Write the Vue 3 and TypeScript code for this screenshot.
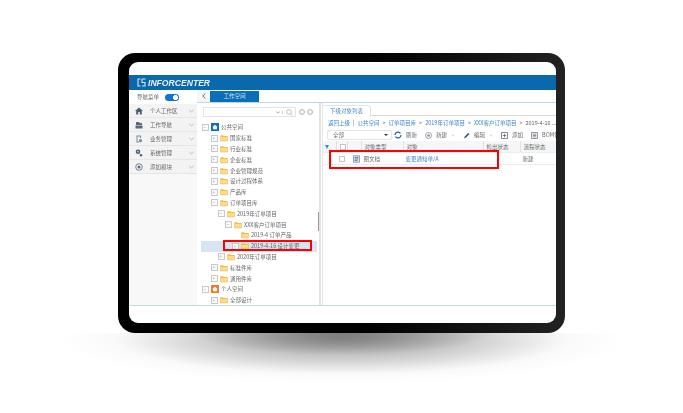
<script setup lang="ts">
const navItems = ['个人工作区', '工作导航', '业务管理', '系统管理', '添加模块']

const treeRows = [
  { label: '公共空间', level: 0, kind: 'pub', open: true },
  { label: '国家标准', level: 1 },
  { label: '行业标准', level: 1 },
  { label: '企业标准', level: 1 },
  { label: '企业管理规范', level: 1 },
  { label: '设计过程体系', level: 1 },
  { label: '产品库', level: 1 },
  { label: '订单项目库', level: 1, open: true },
  { label: '2019年订单项目', level: 2, open: true },
  { label: 'XXX客户订单项目', level: 3, open: true },
  { label: '2019-4 订单产品', level: 4, leaf: true },
  { label: '2019-4-16 设计变更', level: 4, selected: true },
  { label: '2020年订单项目', level: 2 },
  { label: '标准件库', level: 1 },
  { label: '通用件库', level: 1 },
  { label: '个人空间', level: 0, kind: 'own', open: true },
  { label: '全部设计', level: 1 },
]

const crumbs = ['公共空间', '订单项目库', '2019年订单项目', 'XXX客户订单项目']

const indent = (level: number) => (level === 0 ? 0.5 : 2.5 + 7 * level)
</script>

<template>
  <div class="page">
    <div class="device">
      <div class="screen">
        <div class="topbar">
          <svg class="logo" viewBox="0 0 9 9" width="9" height="9">
            <path d="M.5 1H3.5M1 1V8H3.5M5 1H8.5M5 1V4.5H8V8H5" fill="none" stroke="#d5e6f4" stroke-width="1.1" />
          </svg>
          <span class="brand">INFORCENTER</span>
        </div>
        <div class="main">
          <aside class="sidebar">
            <div class="nav-switch">
              <span>导航菜单</span>
              <i class="toggle"></i>
            </div>
            <div v-for="(item, i) in navItems" :key="item" class="nav-item">
              <svg viewBox="0 0 8 8" width="8" height="8" class="nav-icon">
                <path v-if="i === 0" d="M4 .5L8 4H6.8V7.5H4.8V5H3.2V7.5H1.2V4H0Z" fill="#4d5e70" />
                <path v-else-if="i === 1" d="M1 1H4L5 2H7V4H1ZM.5 4.5H7.5V7.5H.5Z" fill="#5b6b7a" />
                <path v-else-if="i === 2" d="M1.5.5H6V3H5V1.5H2.5V6.5H4V7.5H1.5ZM5.5 4A1.6 1.6 0 1 0 5.6 7.2 1.6 1.6 0 0 0 5.5 4Z" fill="#7d8a96" />
                <path v-else-if="i === 3" d="M3 .5A2.3 2.3 0 1 0 3 5.1 2.3 2.3 0 0 0 3 .5ZM3 2A.8.8 0 1 1 3 3.6.8.8 0 0 1 3 2ZM6 5A1.3 1.3 0 1 0 6 7.6 1.3 1.3 0 0 0 6 5Z" fill="#4d5e70" fill-rule="evenodd" />
                <g v-else>
                  <circle cx="4" cy="4" r="3.3" fill="none" stroke="#5b6b7a" stroke-width=".8" />
                  <circle cx="4" cy="4" r="1.5" fill="#5b6b7a" />
                </g>
              </svg>
              <span class="nav-label">{{ item }}</span>
              <svg class="nav-caret" viewBox="0 0 6 4" width="5" height="4">
                <path d="M.5.8L3 3 5.5.8" fill="none" stroke="#9aa5ad" stroke-width=".8" />
              </svg>
            </div>
          </aside>
          <div class="content">
            <div class="tabstrip">
              <span class="collapse">
                <svg viewBox="0 0 5 7" width="4" height="6"><path d="M4 .5L1 3.5 4 6.5" fill="none" stroke="#555" stroke-width="1.1" /></svg>
              </span>
              <span class="tab">工作空间</span>
            </div>
            <div class="panels">
              <section class="tree">
                <div class="tree-search">
                  <div class="search-box">
                    <svg class="search-caret" viewBox="0 0 6 4" width="4" height="3"><path d="M.5.8L3 3 5.5.8" fill="none" stroke="#777" stroke-width="1" /></svg>
                    <svg viewBox="0 0 8 8" width="7" height="7"><circle cx="3.4" cy="3.4" r="2.7" fill="none" stroke="#aaa" stroke-width=".8" /><path d="M5.4 5.4L7.5 7.5" stroke="#aaa" stroke-width=".8" /></svg>
                  </div>
                  <i class="round-btn"></i>
                  <i class="round-btn"></i>
                </div>
                <div class="tree-list">
                  <div
                    v-for="row in treeRows"
                    :key="row.label"
                    class="tree-row"
                    :class="{ selected: row.selected }"
                    :style="{ paddingLeft: indent(row.level) + 'px' }"
                  >
                    <span class="expander" :class="{ hidden: row.leaf }">{{ row.open ? '−' : '+' }}</span>
                    <span v-if="row.kind" class="space-icon" :class="row.kind">
                      <svg viewBox="0 0 8 8" width="6" height="6"><path d="M4 1L7.5 4H6.5V7H1.5V4H.5Z" fill="#fff" /></svg>
                    </span>
                    <svg v-else class="folder" viewBox="0 0 8 8" width="8" height="8">
                      <path d="M.3 1.2H3L3.8 2H7.7V7.2H.3Z" fill="#f4bb48" />
                      <path d="M.9 3H7.1V6.6H.9Z" fill="#fbdc8f" />
                    </svg>
                    <span class="tree-label">{{ row.label }}</span>
                    <span v-if="row.selected" class="tree-mark"></span>
                  </div>
                </div>
                <i class="splitter"></i>
              </section>
              <section class="list">
                <div class="list-tabs"><span class="list-tab">下级对象列表</span></div>
                <div class="crumbs">
                  <a>返回上级</a>
                  <span class="pipe">|</span>
                  <template v-for="c in crumbs" :key="c">
                    <a>{{ c }}</a>
                    <span class="gt">&gt;</span>
                  </template>
                  <span class="crumb-last">2019-4-16 ...</span>
                </div>
                <div class="toolbar">
                  <div class="select"><span>全部</span><i class="select-arrow"></i></div>
                  <svg viewBox="0 0 8 8" width="8" height="8"><path d="M1 4A3 3 0 0 1 6.5 2.4M7 4A3 3 0 0 1 1.5 5.6" fill="none" stroke="#2c5f8a" stroke-width="1.2" /></svg>
                  <span class="tool-text">刷新</span>
                  <svg class="gap" viewBox="0 0 8 8" width="7" height="7"><circle cx="4" cy="4" r="3.4" fill="none" stroke="#667" stroke-width=".7" /><circle cx="4" cy="4" r="1.5" fill="#889" /></svg>
                  <span class="tool-text">新建</span>
                  <svg class="caret" viewBox="0 0 6 4" width="4" height="3"><path d="M.5.8L3 3 5.5.8" fill="none" stroke="#bbb" stroke-width=".9" /></svg>
                  <svg class="gap" viewBox="0 0 8 8" width="7" height="7"><path d="M1 7.5L2 5 6 1 7.4 2.4 3.4 6.4Z" fill="#33516e" /></svg>
                  <span class="tool-text">编辑</span>
                  <svg class="caret" viewBox="0 0 6 4" width="4" height="3"><path d="M.5.8L3 3 5.5.8" fill="none" stroke="#bbb" stroke-width=".9" /></svg>
                  <svg class="gap" viewBox="0 0 8 8" width="7" height="7"><path d="M.6.6H7.4V7.4H.6ZM4 2V6M2 4H6" fill="none" stroke="#556" stroke-width=".8" /></svg>
                  <span class="tool-text">添加</span>
                  <svg class="gap" viewBox="0 0 8 8" width="7" height="7"><path d="M.6.6H7.4V7.4H.6ZM2 2.5H6M2 4H6M2 5.5H6" fill="none" stroke="#667" stroke-width=".8" /></svg>
                  <span class="tool-text">BOM管理</span>
                </div>
                <div class="table">
                  <div class="t-row t-head">
                    <span class="cell mark"><i class="filter"></i></span>
                    <span class="cell"><i class="check"></i></span>
                    <span class="cell"></span>
                    <span class="cell">对象类型</span>
                    <span class="cell">对象</span>
                    <span class="cell">检出状态</span>
                    <span class="cell">流程状态</span>
                  </div>
                  <div class="t-row">
                    <span class="cell mark"></span>
                    <span class="cell"><i class="check"></i></span>
                    <span class="cell doc-cell">
                      <svg viewBox="0 0 8 8" width="7" height="8"><path d="M.5.3H7.5V7.7H.5Z" fill="#d7e2f0" stroke="#35608f" stroke-width=".6" /><path d="M2 2.3H6M2 4H6M2 5.7H5" stroke="#35608f" stroke-width=".8" /></svg>
                    </span>
                    <span class="cell">图文档</span>
                    <a class="cell">变更通知单/A</a>
                    <span class="cell"></span>
                    <span class="cell">新建</span>
                  </div>
                  <span class="table-mark"></span>
                </div>
              </section>
            </div>
          </div>
        </div>
      </div>
    </div>
    <div class="floor"></div>
  </div>
</template>

<style scoped>
.page {
  width: 683px;
  height: 413px;
  box-sizing: border-box;
  padding: 53px 0 0 118px;
  overflow: hidden;
  background: #fff;
  font-family: "Noto Sans CJK SC", "Liberation Sans", sans-serif;
  font-size: 5.5px;
  color: #666;
}

.device {
  position: relative;
  z-index: 1;
  width: 447px;
  height: 280px;
  box-sizing: border-box;
  padding: 9px 9px 10px 11px;
  border-radius: 17px;
  background: linear-gradient(90deg, #000 55%, #222 100%);
}

.screen {
  height: 100%;
  box-sizing: border-box;
  padding-top: 13px;
  padding-bottom: 17px;
  border-radius: 9px;
  background: #fff;
  overflow: hidden;
  display: flex;
  flex-direction: column;
  filter: blur(0.3px);
}

.topbar {
  height: 15px;
  flex: none;
  display: flex;
  align-items: center;
  padding-left: 8px;
  gap: 2px;
  background: #0a68ad;
}

.brand {
  font-family: "Liberation Sans", sans-serif;
  font-size: 8.6px;
  font-weight: 700;
  font-style: italic;
  color: #e8f1f8;
}

.main {
  flex: 1;
  display: flex;
  min-height: 0;
  border-bottom: 1px solid #b9e0d8;
}

.sidebar {
  width: 68px;
  flex: none;
  background: #f8f8f8;
}

.nav-switch {
  height: 14px;
  display: flex;
  align-items: center;
  padding-left: 8px;
  background: #fff;
}

.toggle {
  width: 14px;
  height: 7px;
  margin-left: 6px;
  border-radius: 4px;
  background: radial-gradient(circle at 10.5px 3.5px, #fff 2.4px, #0f74d2 2.8px);
}

.nav-item {
  height: 14px;
  box-sizing: border-box;
  display: flex;
  align-items: center;
  padding-left: 6px;
  background: #f3f3f3;
  border-bottom: 1px solid #e6e6e6;
}

.nav-label {
  margin-left: 7px;
  flex: 1;
}

.nav-caret {
  margin-right: 3px;
}

.content {
  flex: 1;
  min-width: 0;
  display: flex;
  flex-direction: column;
}

.tabstrip {
  height: 12px;
  flex: none;
  display: flex;
  border-bottom: 1px solid #bcd6ea;
}

.collapse {
  width: 13px;
  display: flex;
  align-items: center;
  justify-content: center;
  background: #f6f6f6;
}

.tab {
  width: 49px;
  margin-top: 1px;
  background: #0a6fb8;
  color: #dcebf6;
  text-align: center;
  line-height: 11px;
}

.panels {
  flex: 1;
  display: flex;
  min-height: 0;
}

.tree {
  position: relative;
  width: 122px;
  flex: none;
  border-right: 2px solid #e2e2e2;
  overflow: hidden;
}

.tree-search {
  display: flex;
  align-items: center;
  gap: 2px;
  padding: 4px 0 0 6px;
  height: 10px;
}

.search-box {
  width: 93px;
  height: 10px;
  box-sizing: border-box;
  margin-right: 1px;
  display: flex;
  align-items: center;
  justify-content: flex-end;
  gap: 3px;
  padding-right: 2px;
  border: 1px solid #e4e4e4;
  background: #fff;
}

.search-caret {
  padding-right: 2px;
  border-right: 1px solid #ccc;
}

.round-btn {
  width: 6px;
  height: 6px;
  box-sizing: border-box;
  border: 1px solid #b5b5b5;
  border-radius: 50%;
  background: #f4f4f4;
}

.tree-list {
  margin: 5px 2px 0 4px;
}

.tree-row {
  position: relative;
  height: 10.8px;
  display: flex;
  align-items: center;
  white-space: nowrap;
}

.tree-row.selected {
  background: #d8e5f0;
}

.expander {
  width: 7px;
  height: 7px;
  box-sizing: border-box;
  flex: none;
  margin-right: 2.5px;
  border: 1px solid #c9c9c9;
  background: #fafafa;
  color: #999;
  font-size: 5px;
  line-height: 4.5px;
  text-align: center;
}

.expander.hidden {
  visibility: hidden;
}

.space-icon {
  width: 8px;
  height: 8px;
  flex: none;
  display: flex;
  align-items: center;
  justify-content: center;
}

.space-icon.pub {
  background: #0d6fc4;
}

.space-icon.own {
  background: #ee7b2c;
}

.folder {
  flex: none;
}

.tree-label {
  margin-left: 2px;
}

.tree-mark {
  position: absolute;
  left: 22px;
  top: -1px;
  width: 89px;
  height: 11px;
  box-sizing: border-box;
  border: 2px solid #f00;
}

.splitter {
  position: absolute;
  right: 0;
  top: 109px;
  width: 1px;
  height: 19px;
  background: #999;
}

.list {
  flex: 1;
  min-width: 0;
  margin-left: 1px;
  border-left: 1px solid #e6e6e6;
  overflow: hidden;
}

.list-tabs {
  height: 13px;
  box-sizing: border-box;
  padding-top: 2px;
  border-bottom: 1px solid #d9d9d9;
}

.list-tab {
  display: block;
  width: 40px;
  height: 11px;
  padding-left: 7px;
  line-height: 11px;
  color: #4a8ac2;
  background: #fff;
  border-top: 1px solid #e4e4e4;
  border-right: 1px solid #e4e4e4;
  border-top-right-radius: 4px;
}

.crumbs {
  height: 13px;
  display: flex;
  align-items: center;
  padding-left: 5px;
  white-space: nowrap;
}

.crumbs a,
a.cell {
  color: #3d84c6;
}

.pipe {
  margin: 0 3px;
}

.gt {
  margin: 0 3px;
  color: #777;
}

.crumb-last {
  color: #666;
}

.toolbar {
  height: 12px;
  display: flex;
  align-items: center;
  padding-left: 4px;
  white-space: nowrap;
}

.toolbar svg,
.toolbar span {
  flex: none;
}

.select {
  width: 65px;
  height: 10px;
  box-sizing: border-box;
  flex: none;
  margin-right: 2px;
  display: flex;
  align-items: center;
  justify-content: space-between;
  padding: 0 3px 0 5px;
  border: 1px solid #e4e4e4;
  border-radius: 2px;
}

.select-arrow {
  border: 2px solid transparent;
  border-top: 2px solid #333;
  border-bottom: 0;
}

.tool-text {
  margin-left: 4px;
}

.gap {
  margin-left: 8px;
}

.caret {
  margin-left: 4px;
  margin-right: 0;
}

.table {
  position: relative;
}

.t-row {
  display: grid;
  grid-template-columns: 13px 11px 14px 42px 80px 37px 1fr;
  height: 11px;
  align-items: center;
  border-bottom: 1px solid #e8edf2;
}

.t-head {
  background: #f4f6f8;
}

.t-head .cell + .cell {
  border-left: 1px solid #dde2e7;
}

.cell {
  height: 100%;
  box-sizing: border-box;
  padding-left: 2.5px;
  display: flex;
  align-items: center;
}

.cell.mark {
  padding-left: 2px;
}

.doc-cell {
  padding-left: 6px;
}

.filter {
  border: 2.5px solid transparent;
  border-top: 4px solid #2f8fdc;
  border-bottom: 0;
}

.check {
  width: 6px;
  height: 6px;
  box-sizing: border-box;
  border: 1px solid #c4c4c4;
  background: #fff;
}

.table-mark {
  position: absolute;
  left: 6px;
  top: 9px;
  width: 170px;
  height: 19px;
  box-sizing: border-box;
  border: 2px solid #f00;
}

.floor {
  width: 564px;
  height: 62px;
  margin-left: -58px;
  background:
    radial-gradient(ellipse 150px 22px at 50% 0, rgba(110, 110, 110, 0.75), rgba(120, 120, 120, 0) 100%),
    radial-gradient(ellipse 282px 44px at 50% 6px, rgba(120, 120, 120, 0.75), rgba(150, 150, 150, 0.42) 50%, rgba(210, 210, 210, 0.12) 80%, rgba(255, 255, 255, 0) 100%);
}
</style>

<style>
html,
body {
  background: #fff;
}
</style>
